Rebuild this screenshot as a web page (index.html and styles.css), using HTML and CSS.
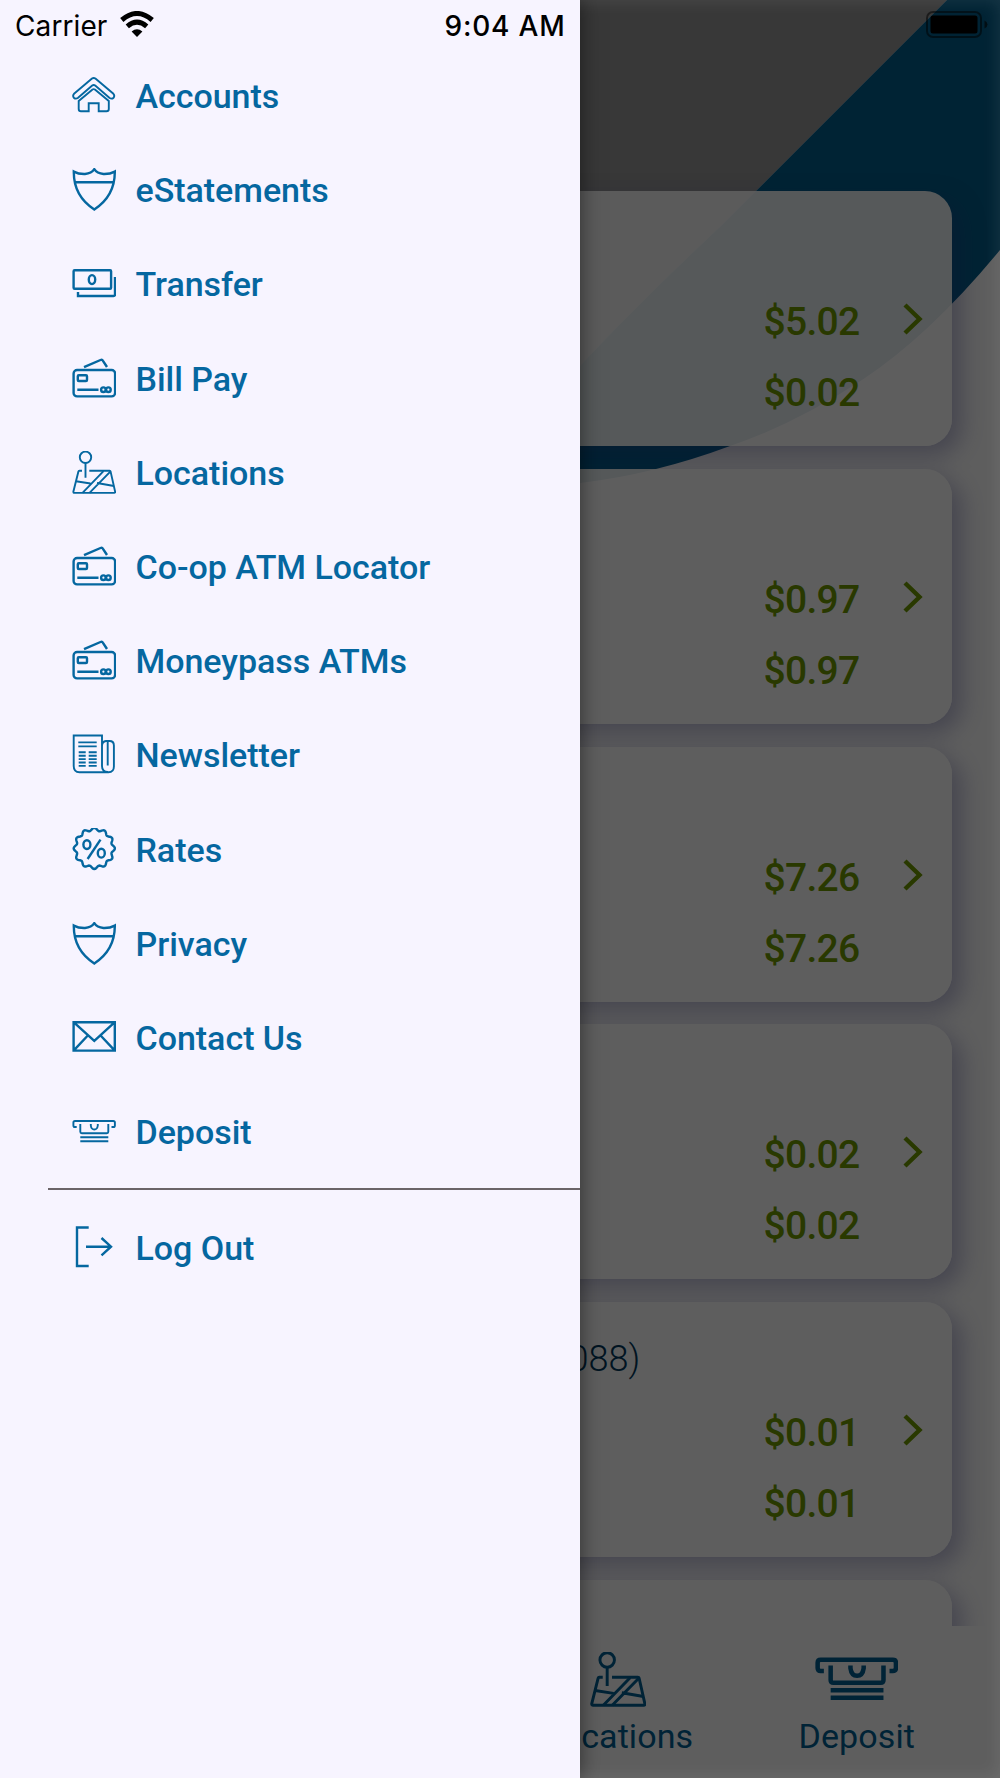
FILE: index.html
```
<!DOCTYPE html>
<html lang="en">

<head>
    <meta charset="utf-8">
    <title>Accounts</title>
    <meta name="viewport" content="width=device-width, initial-scale=1">
    <link rel="stylesheet" href="styles.css">
</head>

<body>
    <!-- icon set -->
    <svg class="sprite" width="0" height="0">
        <symbol id="i-home" viewBox="0 0 44 44">
            <path d="M2 19.800 20 4.600Q21.700 3.200 23.400 4.600L41.400 19.800Q43 21.600 41.600 23.700Q39.700 25.400 37.600 24L23.200 11.600Q21.700 10.500 20.200 11.600L5.800 24Q3.700 25.400 1.800 23.700Q.4 21.600 2 19.800Z" />
            <path d="M6.700 27 20.500 15.600Q21.700 14.700 22.900 15.600L36.800 27V35Q36.800 37.300 34.500 37.300H26.700V29.200H16.700V37.300H9Q6.700 37.300 6.700 35Z" />
        </symbol>
        <symbol id="i-shield" viewBox="0 0 44 44">
            <path d="M22.300 1.200Q19.500 5.500 13 6Q6.500 6.200 1.800 3.600Q1.500 28 22.300 41.500Q43 28 42.800 3.600Q38 6.200 31.500 6Q25 5.500 22.300 1.200ZM3 14.200H41.500" />
        </symbol>
        <symbol id="i-money" viewBox="0 0 44 44">
            <rect x="1.600" y="8.200" width="37.500" height="18.600" rx="1" />
            <ellipse cx="20" cy="17.600" rx="3.200" ry="4.500" />
            <path d="M43 15V32.500Q43 34 41.500 34H6V30" />
        </symbol>
        <symbol id="i-card" viewBox="0 0 44 44">
            <rect x="1.600" y="13" width="41.500" height="26.400" rx="3.500" />
            <rect x="5.800" y="18.200" width="9.200" height="5.800" rx="1" />
            <path d="M5.300 32.700H26.500M12 10.200 28.500 3Q30.200 2.300 31 3.800L35 10" />
            <circle cx="31.400" cy="32.700" r="2.300" />
            <circle cx="36.400" cy="32.700" r="2.300" />
        </symbol>
        <symbol id="i-map" viewBox="0 0 44 44">
            <circle cx="13.500" cy="6.300" r="5.700" />
            <path d="M13.500 11.800V26.800M10 19.800H7.300Q6.600 19.800 6.400 20.600L1.400 40.500Q1.200 41.900 2.500 41.900H42.200Q43.400 41.900 43.100 40.600L38.600 20.600Q38.400 19.800 37.600 19.800H17.300" />
            <path d="M31.500 20.200 10.500 41.800M38.300 20.600 17.500 41.800M4 30.200 18.500 32.500M25 32 42 35" />
        </symbol>
        <symbol id="i-news" viewBox="0 0 44 44">
            <path d="M30 33.500V2.500H1.700V33Q1.700 39.200 7.500 39.200H36.500Q41.900 39.200 41.900 33.500V12.500Q41.900 8 37.500 8H34Q30 8.500 30 13M30 33Q30 39 36 39M35.700 8.500V32.500" />
            <path d="M6.300 9.400H24.700M6.300 13.400H24.700M6.700 19.200H13.700M6.700 22.700H13.700M6.700 26.100H13.700M6.700 29.500H13.700M6.700 32.900H13.700M16.700 19.200H24.700M16.700 22.700H24.700M16.700 26.100H24.700M16.700 29.500H24.700M16.700 32.900H24.700" />
        </symbol>
        <symbol id="i-rates" viewBox="0 0 44 44">
            <path id="seal" d="" />
            <ellipse cx="14.900" cy="16.600" rx="3.500" ry="4.400" />
            <ellipse cx="29.300" cy="25.200" rx="3.500" ry="4.400" />
            <path d="M28.500 11.600 15.600 31" />
        </symbol>
        <symbol id="i-mail" viewBox="0 0 44 44">
            <path d="M1.600 6.200H42.800V34.600H1.600ZM1.600 6.200 22.300 25 42.800 6.200M1.600 34.600 15.800 19.500M42.800 34.600 28.600 19.500" />
        </symbol>
        <symbol id="i-deposit" viewBox="0 0 44 44">
            <path d="M4.700 17H3Q1.400 17 1.400 15.400V12.600Q1.400 11 3 11H41.300Q42.900 11 42.900 12.600V15.400Q42.900 17 41.300 17H39.500" />
            <path d="M8.300 14V21.700Q8.300 23.200 9.800 23.200H34.800Q36.300 23.200 36.300 21.700V14M18.800 14V15.500Q19.300 19.500 22.300 19.500T25.800 15.500V14M8.300 27.200H36.300M8.300 31.200H36.300" />
        </symbol>
        <symbol id="i-logout" viewBox="0 0 44 44">
            <path d="M16.700 1.500H5V40H16.700M14 20.700H39M29.500 12 39 20.700 29.500 29.300" />
        </symbol>
    </svg>

    <div class="screen">
        <!-- accounts screen behind the menu -->
        <div class="page">
            <svg class="swoosh" viewBox="0 0 1000 500">
                <path fill="#979797" d="M0 0H947L720 227Q640 302 580 366L500 440H0Z" />
                <path fill="#005f8d" d="M947 0H1000V250Q930 335 862 380Q795 424 730 446Q655 474 580 483L500 490V440L580 366Q640 302 720 227Z" />
            </svg>
            <div class="accounts">
                <div class="card">
                    <div class="card-name"></div>
                    <div class="amounts"><span>$5.02</span><span>$0.02</span></div>
                    <svg class="chevron" viewBox="0 0 20 32"><path d="M2 2 16.500 16 2 30" /></svg>
                </div>
                <div class="card">
                    <div class="card-name"></div>
                    <div class="amounts"><span>$0.97</span><span>$0.97</span></div>
                    <svg class="chevron" viewBox="0 0 20 32"><path d="M2 2 16.500 16 2 30" /></svg>
                </div>
                <div class="card">
                    <div class="card-name"></div>
                    <div class="amounts"><span>$7.26</span><span>$7.26</span></div>
                    <svg class="chevron" viewBox="0 0 20 32"><path d="M2 2 16.500 16 2 30" /></svg>
                </div>
                <div class="card">
                    <div class="card-name"></div>
                    <div class="amounts"><span>$0.02</span><span>$0.02</span></div>
                    <svg class="chevron" viewBox="0 0 20 32"><path d="M2 2 16.500 16 2 30" /></svg>
                </div>
                <div class="card">
                    <div class="card-name">088)</div>
                    <div class="amounts"><span>$0.01</span><span>$0.01</span></div>
                    <svg class="chevron" viewBox="0 0 20 32"><path d="M2 2 16.500 16 2 30" /></svg>
                </div>
                <div class="card"></div>
            </div>
            <div class="tabbar">
                <div class="tab">
                    <svg class="tab-icon tab-map"><use href="#i-map" /></svg>
                    <span>Locations</span>
                </div>
                <div class="tab">
                    <svg class="tab-icon tab-deposit"><use href="#i-deposit" /></svg>
                    <span>Deposit</span>
                </div>
            </div>
            <svg class="battery" viewBox="0 0 64 28">
                <rect x="1" y="1" width="54" height="25" rx="6" fill="none" stroke="#000" stroke-opacity=".5" stroke-width="2" />
                <rect x="4.500" y="4.500" width="47" height="18" rx="2.500" />
                <path d="M58.500 9.500Q61.500 11 61.500 13.500T58.500 17.500Z" fill-opacity=".6" />
            </svg>
            <div class="dim"></div>
        </div>

        <!-- side menu -->
        <div class="menu">
            <div class="status">
                <span class="carrier">Carrier</span>
                <svg class="wifi" viewBox="0 0 34 27">
                    <path d="M1.800 9Q17-4 32.200 9" />
                    <path d="M7.300 15.300Q17 7 26.700 15.300" />
                    <path class="wifi-dot" d="M17 26 11.600 20.500Q17 16 22.400 20.500Z" />
                </svg>
                <span class="time">9:04 AM</span>
            </div>
            <ul class="menu-list">
                <li><svg><use href="#i-home" /></svg>Accounts</li>
                <li class="bold"><svg><use href="#i-shield" /></svg>eStatements</li>
                <li class="bold"><svg><use href="#i-money" /></svg>Transfer</li>
                <li class="bold"><svg><use href="#i-card" /></svg>Bill Pay</li>
                <li><svg><use href="#i-map" /></svg>Locations</li>
                <li class="bold"><svg><use href="#i-card" /></svg>Co-op ATM Locator</li>
                <li class="bold"><svg><use href="#i-card" /></svg>Moneypass ATMs</li>
                <li><svg><use href="#i-news" /></svg>Newsletter</li>
                <li class="bold"><svg><use href="#i-rates" /></svg>Rates</li>
                <li class="bold"><svg><use href="#i-shield" /></svg>Privacy</li>
                <li class="bold"><svg><use href="#i-mail" /></svg>Contact Us</li>
                <li><svg><use href="#i-deposit" /></svg>Deposit</li>
            </ul>
            <ul class="menu-list menu-foot">
                <li class="bold"><svg><use href="#i-logout" /></svg>Log Out</li>
            </ul>
        </div>
    </div>
    <script>
        // scalloped edge of the rates badge
        var d = "";
        for (var i = 0; i <= 144; i++) {
            var a = i * Math.PI / 72;
            var r = 19.2 + 1.4 * Math.cos(12 * a);
            d += (i ? "L" : "M") + (22.3 + r * Math.cos(a)).toFixed(2) + " " + (20.4 + r * Math.sin(a)).toFixed(2);
        }
        document.getElementById("seal").setAttribute("d", d + "Z");
    </script>
</body>

</html>
```
FILE: styles.css
```
* {
    box-sizing: border-box;
}

body {
    margin: 0;
    font-family: Roboto, "Liberation Sans", sans-serif;
}

.sprite {
    position: absolute;
}

.screen {
    position: relative;
    width: 1000px;
    height: 1778px;
    overflow: hidden;
}

/* accounts screen */
.page {
    display: flex;
    flex-direction: column;
    height: 100%;
    background: #fff;
}

.swoosh {
    position: absolute;
    top: 0;
    left: 0;
    width: 1000px;
    height: 500px;
}

.accounts {
    position: relative;
    display: flex;
    flex-direction: column;
    gap: 22.800px;
    height: 1626px;
    padding: 191px 48.500px 0;
    overflow: hidden;
}

.card {
    display: grid;
    grid-template-columns: 1fr 33px;
    grid-template-rows: 96px 1fr;
    flex: none;
    height: 255px;
    padding-right: 16px;
    border-radius: 27px;
    background: rgba(255, 255, 255, .91);
    box-shadow: 9px 9px 24px rgba(50, 50, 130, .34);
}

.card-name {
    grid-column: 1 / 3;
    padding: 36px 0 0 520px;
    color: #00385c;
    font-size: 36px;
    font-weight: 300;
    line-height: 42px;
}

.amounts {
    display: flex;
    flex-direction: column;
    padding-left: 715px;
    color: #6f9a00;
    font-size: 39px;
    font-weight: 500;
    letter-spacing: -.7px;
    line-height: 71px;
}

.chevron {
    width: 20px;
    height: 32px;
    margin-top: 16px;
    fill: none;
    stroke: #6f9a00;
    stroke-width: 4.400;
}

.tabbar {
    display: flex;
    justify-content: flex-end;
    flex: 1;
    padding: 0 24px;
    background: #fff;
}

.tab {
    display: flex;
    flex-direction: column;
    align-items: center;
    width: 238.500px;
    padding-top: 26px;
    color: #005f93;
    font-size: 34px;
    letter-spacing: .1px;
    line-height: 40px;
}

.tab-icon {
    height: 56px;
    margin-bottom: 8px;
    overflow: visible;
    fill: none;
    stroke: #005f93;
    stroke-width: 2.300;
}

.tab-map {
    width: 56px;
}

.tab-deposit {
    width: 83px;
    height: 83px;
    margin: -13px 0 -6px;
    stroke-width: 2.400;
}

.battery {
    position: absolute;
    top: 11px;
    left: 926px;
    width: 64px;
    height: 28px;
}

.dim {
    position: absolute;
    inset: 0;
    background: rgba(0, 0, 0, .63);
    box-shadow: inset 0 0 18px rgba(255, 255, 255, .1);
}

/* side menu */
.menu {
    position: absolute;
    top: 0;
    left: 0;
    width: 579.500px;
    height: 100%;
    background: #f7f4ff;
    box-shadow: 0 0 20px rgba(0, 0, 0, .5);
}

.status {
    display: flex;
    align-items: center;
    height: 49px;
    padding: 2px 14px 0 15px;
    font-family: Inter, "Liberation Sans", sans-serif;
    font-size: 28px;
    letter-spacing: .1px;
}

.wifi {
    width: 34px;
    height: 27px;
    margin: -3px 0 0 13px;
    fill: none;
    stroke: #000;
    stroke-width: 5;
}

.wifi-dot {
    fill: #000;
    stroke: none;
}

.time {
    margin-left: auto;
    font-weight: 500;
    letter-spacing: .8px;
}

.menu-list {
    margin: 0;
    padding: 0 0 0 72px;
    list-style: none;
}

.menu-list li {
    display: flex;
    align-items: center;
    gap: 19.500px;
    height: 94.200px;
    color: #0567a0;
    font-size: 34px;
    font-weight: 500;
    letter-spacing: -.03px;
}

.menu-list svg {
    width: 44px;
    height: 44px;
    overflow: visible;
    fill: none;
    stroke: #0567a0;
    stroke-width: 1.900;
}

.menu-list .bold svg {
    stroke-width: 2.400;
}

.menu-foot {
    margin: 9px 0 0 48px;
    padding: 11px 0 0 24px;
    border-top: 2px solid #6b6468;
}
```
